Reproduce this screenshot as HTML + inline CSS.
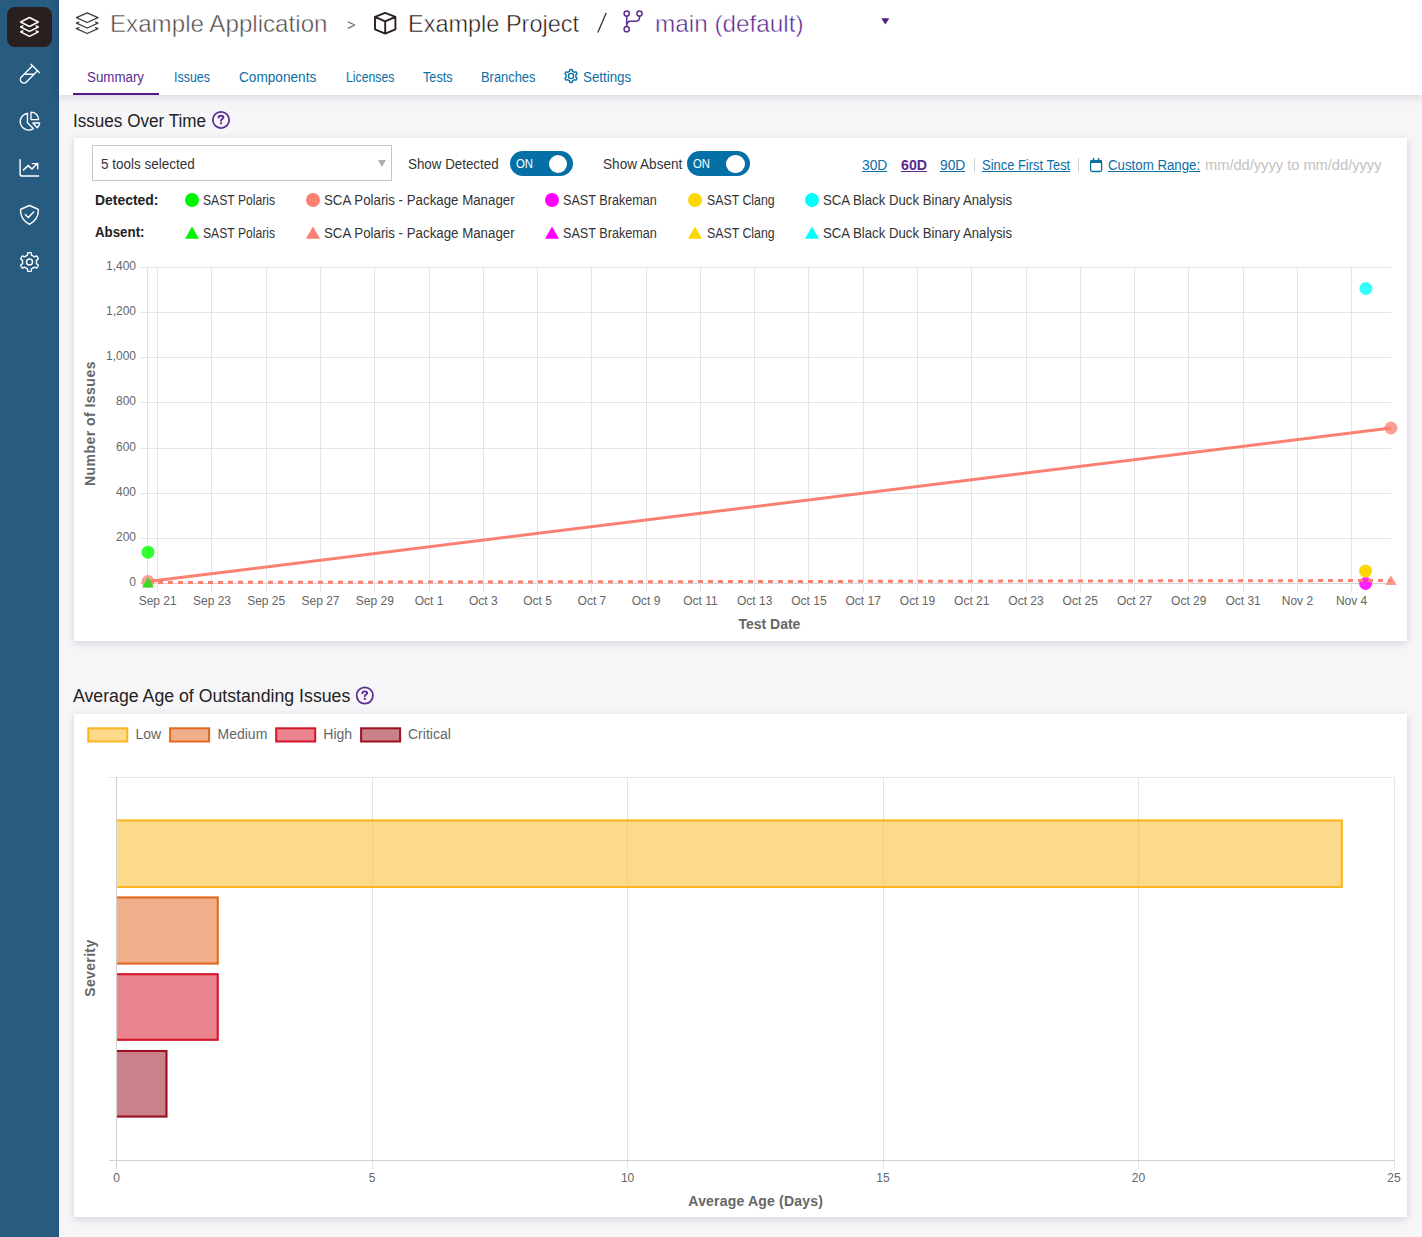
<!DOCTYPE html>
<html><head><meta charset="utf-8"><title>Summary</title>
<style>
html,body{margin:0;padding:0;}
body{width:1422px;height:1237px;position:relative;overflow:hidden;background:#f6f6f9;font-family:"Liberation Sans", sans-serif;}
.abs{position:absolute;}
.ic{position:absolute;overflow:visible;}
.t{position:absolute;white-space:pre;line-height:1;transform-origin:0 0;}
.ct{font-family:"Liberation Sans", sans-serif;font-size:12px;fill:#666;}
.cl{font-family:"Liberation Sans", sans-serif;font-size:14px;fill:#666;}
.cb{font-family:"Liberation Sans", sans-serif;font-size:14px;font-weight:bold;fill:#666;}
</style></head><body>
<div class="abs" style="left:0;top:0;width:58px;height:1237px;background:#285b80;border-right:1px solid #215380"></div>
<div class="abs" style="left:7px;top:7px;width:45px;height:40px;border-radius:8px;background:#2a1f1f"></div>
<div class="abs" style="left:59px;top:0;width:1363px;height:95px;background:#fff;box-shadow:0 2px 8px rgba(20,20,50,0.15)"></div>
<div class="abs" style="left:73px;top:93px;width:86px;height:2px;background:#52198a"></div>
<div class="abs" style="left:74px;top:138px;width:1333px;height:503px;background:#fff;box-shadow:0 2px 8px rgba(20,20,40,0.15)"></div>
<div class="abs" style="left:74px;top:714px;width:1333px;height:503px;background:#fff;box-shadow:0 2px 8px rgba(20,20,40,0.15)"></div>
<svg class="abs" style="left:0;top:0" width="1422" height="720"><path d="M29.47 17.54 L38.32 22.009999999999998 L29.47 26.479999999999997 L20.619999999999997 22.009999999999998 Z M22.82 25.85 L20.619999999999997 26.96 L29.47 31.43 L38.32 26.96 L36.12 25.85 M22.82 30.80 L20.619999999999997 31.91 L29.47 36.38 L38.32 31.91 L36.12 30.80 " fill="none" stroke="#fff" stroke-width="1.5" stroke-linejoin="round" stroke-linecap="round"/><path d="M31 64.25 L39.3 72.55 M32.5 65.75 L21.4 76.9 A3.57 3.57 0 0 0 26.45 81.95 L37.5 70.8 M24 74.2 L34.1 74.2" fill="none" stroke="#fff" stroke-width="1.35" stroke-linecap="round"/><path d="M27.45 113.3 L27.45 122.8 L33.3 128.6 A8.4 8.4 0 1 1 27.45 113.3 Z M31 112.1 L31 119.6 L38.6 119.6 A7.6 7.6 0 0 0 31 112.1 Z M32.9 123 L39.7 123 A7.3 7.3 0 0 1 37.3 127.7 Z" fill="none" stroke="#fff" stroke-width="1.35" stroke-linejoin="round"/><path d="M20.1 159.6 L20.1 173.9 Q20.1 176 22.2 176 L38.6 176 M23.5 169.9 L28.2 165.6 L32 169 L37.3 163.6 M32.3 163.6 L37.7 163.6 L37.7 168.7" fill="none" stroke="#fff" stroke-width="1.45" stroke-linecap="round" stroke-linejoin="miter"/><path d="M29.45 205.5 L37.6 209 Q38.4 209.4 38.4 210.3 C38.3 216.5 35.5 221.3 29.45 224.4 C23.4 221.3 20.6 216.5 20.5 210.3 Q20.5 209.4 21.3 209 Z M25.2 214.6 L28.3 217.4 L33.7 212.1" fill="none" stroke="#fff" stroke-width="1.4" stroke-linejoin="round" stroke-linecap="round"/><path d="M36.50 262.00 L36.50 262.18 L36.49 262.37 L36.48 262.55 L36.46 262.73 L36.44 262.91 L36.41 263.10 L36.38 263.28 L36.35 263.46 L36.39 263.66 L36.80 263.96 L37.39 264.34 L37.94 264.74 L38.27 265.11 L38.28 265.37 L38.18 265.60 L38.09 265.82 L37.98 266.05 L37.88 266.27 L37.76 266.49 L37.64 266.70 L37.51 266.91 L37.38 267.12 L37.25 267.32 L37.10 267.53 L36.96 267.72 L36.81 267.92 L36.58 268.04 L36.10 267.94 L35.47 267.66 L34.84 267.34 L34.38 267.14 L34.18 267.20 L34.05 267.32 L33.91 267.44 L33.76 267.55 L33.61 267.66 L33.46 267.77 L33.31 267.87 L33.16 267.97 L33.00 268.06 L32.84 268.15 L32.68 268.24 L32.51 268.32 L32.35 268.39 L32.18 268.47 L32.01 268.54 L31.84 268.60 L31.66 268.66 L31.51 268.80 L31.46 269.30 L31.42 270.00 L31.35 270.68 L31.20 271.15 L30.97 271.28 L30.73 271.32 L30.48 271.35 L30.24 271.37 L29.99 271.39 L29.75 271.40 L29.50 271.40 L29.25 271.40 L29.01 271.39 L28.76 271.37 L28.52 271.35 L28.27 271.32 L28.03 271.28 L27.80 271.15 L27.65 270.68 L27.58 270.00 L27.54 269.30 L27.49 268.80 L27.34 268.66 L27.16 268.60 L26.99 268.54 L26.82 268.47 L26.65 268.39 L26.49 268.32 L26.32 268.24 L26.16 268.15 L26.00 268.06 L25.84 267.97 L25.69 267.87 L25.54 267.77 L25.39 267.66 L25.24 267.55 L25.09 267.44 L24.95 267.32 L24.82 267.20 L24.62 267.14 L24.16 267.34 L23.53 267.66 L22.90 267.94 L22.42 268.04 L22.19 267.92 L22.04 267.72 L21.90 267.53 L21.75 267.32 L21.62 267.12 L21.49 266.91 L21.36 266.70 L21.24 266.49 L21.12 266.27 L21.02 266.05 L20.91 265.82 L20.82 265.60 L20.72 265.37 L20.73 265.11 L21.06 264.74 L21.61 264.34 L22.20 263.96 L22.61 263.66 L22.65 263.46 L22.62 263.28 L22.59 263.10 L22.56 262.91 L22.54 262.73 L22.52 262.55 L22.51 262.37 L22.50 262.18 L22.50 262.00 L22.50 261.82 L22.51 261.63 L22.52 261.45 L22.54 261.27 L22.56 261.09 L22.59 260.90 L22.62 260.72 L22.65 260.54 L22.61 260.34 L22.20 260.04 L21.61 259.66 L21.06 259.26 L20.73 258.89 L20.72 258.63 L20.82 258.40 L20.91 258.18 L21.02 257.95 L21.12 257.73 L21.24 257.51 L21.36 257.30 L21.49 257.09 L21.62 256.88 L21.75 256.68 L21.90 256.47 L22.04 256.28 L22.19 256.08 L22.42 255.96 L22.90 256.06 L23.53 256.34 L24.16 256.66 L24.62 256.86 L24.82 256.80 L24.95 256.68 L25.09 256.56 L25.24 256.45 L25.39 256.34 L25.54 256.23 L25.69 256.13 L25.84 256.03 L26.00 255.94 L26.16 255.85 L26.32 255.76 L26.49 255.68 L26.65 255.61 L26.82 255.53 L26.99 255.46 L27.16 255.40 L27.34 255.34 L27.49 255.20 L27.54 254.70 L27.58 254.00 L27.65 253.32 L27.80 252.85 L28.03 252.72 L28.27 252.68 L28.52 252.65 L28.76 252.63 L29.01 252.61 L29.25 252.60 L29.50 252.60 L29.75 252.60 L29.99 252.61 L30.24 252.63 L30.48 252.65 L30.73 252.68 L30.97 252.72 L31.20 252.85 L31.35 253.32 L31.42 254.00 L31.46 254.70 L31.51 255.20 L31.66 255.34 L31.84 255.40 L32.01 255.46 L32.18 255.53 L32.35 255.61 L32.51 255.68 L32.68 255.76 L32.84 255.85 L33.00 255.94 L33.16 256.03 L33.31 256.13 L33.46 256.23 L33.61 256.34 L33.76 256.45 L33.91 256.56 L34.05 256.68 L34.18 256.80 L34.38 256.86 L34.84 256.66 L35.47 256.34 L36.10 256.06 L36.58 255.96 L36.81 256.08 L36.96 256.28 L37.10 256.47 L37.25 256.68 L37.38 256.88 L37.51 257.09 L37.64 257.30 L37.76 257.51 L37.88 257.73 L37.98 257.95 L38.09 258.18 L38.18 258.40 L38.28 258.63 L38.27 258.89 L37.94 259.26 L37.39 259.66 L36.80 260.04 L36.39 260.34 L36.35 260.54 L36.38 260.72 L36.41 260.90 L36.44 261.09 L36.46 261.27 L36.48 261.45 L36.49 261.63 L36.50 261.82 Z" fill="none" stroke="#fff" stroke-width="1.4" stroke-linejoin="round"/><circle cx="29.5" cy="262" r="3.0" fill="none" stroke="#fff" stroke-width="1.4"/><path d="M87.2 12.9 L98.0 17.7 L87.2 22.5 L76.4 17.7 Z M78.80 22.13 L76.4 23.20 L87.2 28.00 L98.0 23.20 L95.60 22.13 M78.80 27.63 L76.4 28.70 L87.2 33.50 L98.0 28.70 L95.60 27.63 " fill="none" stroke="#433b3b" stroke-width="1.3" stroke-linejoin="round" stroke-linecap="round"/><path d="M385.2 12.9 L395.4 16.9 L395.4 29.3 L385.2 33.6 L375 29.3 L375 16.9 Z M375 16.9 L385.2 21.3 L395.4 16.9 M385.2 21.3 L385.2 33.6" fill="none" stroke="#2a2020" stroke-width="1.9" stroke-linejoin="round"/><circle cx="626.7" cy="13.5" r="2.6" fill="none" stroke="#5b2d8f" stroke-width="1.5"/><circle cx="639.5" cy="13.5" r="2.6" fill="none" stroke="#5b2d8f" stroke-width="1.5"/><circle cx="626.7" cy="29.2" r="2.6" fill="none" stroke="#5b2d8f" stroke-width="1.5"/><path d="M626.7 16.1 L626.7 26.6 M639.5 16.1 L639.5 17.6 C639.5 20 637.8 21.3 635.6 21.3 L630.6 21.3 C628.2 21.3 626.8 23 626.8 25.6" fill="none" stroke="#5b2d8f" stroke-width="1.5"/><path d="M606.2 13 L597.8 32.4" stroke="#333" stroke-width="1.3"/><path d="M881.3 18.2 L889.3 18.2 L885.3 24.4 Z" fill="#4b2080"/><path d="M575.90 76.00 L575.90 76.13 L575.89 76.26 L575.88 76.38 L575.87 76.51 L575.86 76.64 L575.84 76.77 L575.82 76.89 L575.79 77.02 L575.82 77.16 L576.09 77.36 L576.48 77.62 L576.85 77.90 L577.07 78.15 L577.07 78.33 L577.01 78.49 L576.94 78.64 L576.87 78.80 L576.79 78.95 L576.71 79.10 L576.63 79.25 L576.54 79.40 L576.45 79.54 L576.36 79.68 L576.26 79.82 L576.16 79.96 L576.05 80.09 L575.89 80.18 L575.57 80.12 L575.15 79.94 L574.73 79.73 L574.41 79.60 L574.28 79.64 L574.18 79.73 L574.08 79.81 L573.98 79.89 L573.88 79.96 L573.78 80.04 L573.67 80.11 L573.56 80.18 L573.45 80.24 L573.34 80.31 L573.22 80.37 L573.11 80.42 L572.99 80.48 L572.88 80.53 L572.76 80.57 L572.64 80.62 L572.51 80.66 L572.41 80.76 L572.36 81.09 L572.34 81.56 L572.28 82.02 L572.17 82.33 L572.02 82.42 L571.85 82.44 L571.68 82.46 L571.51 82.48 L571.34 82.49 L571.17 82.50 L571.00 82.50 L570.83 82.50 L570.66 82.49 L570.49 82.48 L570.32 82.46 L570.15 82.44 L569.98 82.42 L569.83 82.33 L569.72 82.02 L569.66 81.56 L569.64 81.09 L569.59 80.76 L569.49 80.66 L569.36 80.62 L569.24 80.57 L569.12 80.53 L569.01 80.48 L568.89 80.42 L568.78 80.37 L568.66 80.31 L568.55 80.24 L568.44 80.18 L568.33 80.11 L568.22 80.04 L568.12 79.96 L568.02 79.89 L567.92 79.81 L567.82 79.73 L567.72 79.64 L567.59 79.60 L567.27 79.73 L566.85 79.94 L566.43 80.12 L566.11 80.18 L565.95 80.09 L565.84 79.96 L565.74 79.82 L565.64 79.68 L565.55 79.54 L565.46 79.40 L565.37 79.25 L565.29 79.10 L565.21 78.95 L565.13 78.80 L565.06 78.64 L564.99 78.49 L564.93 78.33 L564.93 78.15 L565.15 77.90 L565.52 77.62 L565.91 77.36 L566.18 77.16 L566.21 77.02 L566.18 76.89 L566.16 76.77 L566.14 76.64 L566.13 76.51 L566.12 76.38 L566.11 76.26 L566.10 76.13 L566.10 76.00 L566.10 75.87 L566.11 75.74 L566.12 75.62 L566.13 75.49 L566.14 75.36 L566.16 75.23 L566.18 75.11 L566.21 74.98 L566.18 74.84 L565.91 74.64 L565.52 74.38 L565.15 74.10 L564.93 73.85 L564.93 73.67 L564.99 73.51 L565.06 73.36 L565.13 73.20 L565.21 73.05 L565.29 72.90 L565.37 72.75 L565.46 72.60 L565.55 72.46 L565.64 72.32 L565.74 72.18 L565.84 72.04 L565.95 71.91 L566.11 71.82 L566.43 71.88 L566.85 72.06 L567.27 72.27 L567.59 72.40 L567.72 72.36 L567.82 72.27 L567.92 72.19 L568.02 72.11 L568.12 72.04 L568.22 71.96 L568.33 71.89 L568.44 71.82 L568.55 71.76 L568.66 71.69 L568.78 71.63 L568.89 71.58 L569.01 71.52 L569.12 71.47 L569.24 71.43 L569.36 71.38 L569.49 71.34 L569.59 71.24 L569.64 70.91 L569.66 70.44 L569.72 69.98 L569.83 69.67 L569.98 69.58 L570.15 69.56 L570.32 69.54 L570.49 69.52 L570.66 69.51 L570.83 69.50 L571.00 69.50 L571.17 69.50 L571.34 69.51 L571.51 69.52 L571.68 69.54 L571.85 69.56 L572.02 69.58 L572.17 69.67 L572.28 69.98 L572.34 70.44 L572.36 70.91 L572.41 71.24 L572.51 71.34 L572.64 71.38 L572.76 71.43 L572.88 71.47 L572.99 71.52 L573.11 71.58 L573.22 71.63 L573.34 71.69 L573.45 71.76 L573.56 71.82 L573.67 71.89 L573.78 71.96 L573.88 72.04 L573.98 72.11 L574.08 72.19 L574.18 72.27 L574.28 72.36 L574.41 72.40 L574.73 72.27 L575.15 72.06 L575.57 71.88 L575.89 71.82 L576.05 71.91 L576.16 72.04 L576.26 72.18 L576.36 72.32 L576.45 72.46 L576.54 72.60 L576.63 72.75 L576.71 72.90 L576.79 73.05 L576.87 73.20 L576.94 73.36 L577.01 73.51 L577.07 73.67 L577.07 73.85 L576.85 74.10 L576.48 74.38 L576.09 74.64 L575.82 74.84 L575.79 74.98 L575.82 75.11 L575.84 75.23 L575.86 75.36 L575.87 75.49 L575.88 75.62 L575.89 75.74 L575.90 75.87 Z" fill="none" stroke="#0b6ea6" stroke-width="1.35" stroke-linejoin="round"/><circle cx="571" cy="76" r="2.6" fill="none" stroke="#0b6ea6" stroke-width="1.35"/><circle cx="221" cy="119.9" r="8.15" fill="none" stroke="#5b2d8f" stroke-width="1.75"/><path d="M218.60 117.60 C218.60 116.10 219.70 115.80 221.00 115.80 C222.50 115.80 223.40 116.60 223.40 117.60 C223.40 118.90 220.90 119.10 220.90 120.70" fill="none" stroke="#5b2d8f" stroke-width="1.9" stroke-linecap="round" stroke-linejoin="round"/><circle cx="221.00" cy="123.30" r="1.15" fill="#5b2d8f"/><circle cx="364.8" cy="695.5" r="8.15" fill="none" stroke="#5b2d8f" stroke-width="1.75"/><path d="M362.40 693.20 C362.40 691.70 363.50 691.40 364.80 691.40 C366.30 691.40 367.20 692.20 367.20 693.20 C367.20 694.50 364.70 694.70 364.70 696.30" fill="none" stroke="#5b2d8f" stroke-width="1.9" stroke-linecap="round" stroke-linejoin="round"/><circle cx="364.80" cy="698.90" r="1.15" fill="#5b2d8f"/><path d="M1092.1 160.6 L1100.1 160.6 Q1101.6 160.6 1101.6 162.1 L1101.6 170 Q1101.6 171.5 1100.1 171.5 L1092.1 171.5 Q1090.6 171.5 1090.6 170 L1090.6 162.1 Q1090.6 160.6 1092.1 160.6 Z" fill="none" stroke="#0a6fa3" stroke-width="1.3"/><rect x="1090.2" y="160" width="11.8" height="3.1" rx="1.2" fill="#0a6fa3"/><path d="M1093.5 158 L1093.5 160.5 M1098.6 158 L1098.6 160.5" stroke="#0a6fa3" stroke-width="1.5"/></svg>
<div class="abs" style="left:92px;top:145px;width:298px;height:34px;border:1px solid #c6c6c6;background:#fff"></div>
<svg class="ic" style="left:377px;top:159px" width="10" height="9" viewBox="0 0 10 9"><path d="M1 1 L9 1 L5 8 Z" fill="#b0b0b0"/></svg>
<div class="abs" style="left:509.8px;top:151px;width:63px;height:25px;border-radius:13px;background:#0470a5"></div>
<div class="abs" style="left:548.8px;top:154.7px;width:18.5px;height:18.5px;border-radius:50%;background:#fff"></div>
<div class="abs" style="left:687.2px;top:151px;width:63px;height:25px;border-radius:13px;background:#0470a5"></div>
<div class="abs" style="left:726.2px;top:154.7px;width:18.5px;height:18.5px;border-radius:50%;background:#fff"></div>
<div class="abs" style="left:974.1px;top:158px;width:1px;height:14px;background:#d0d0d0"></div>
<div class="abs" style="left:1077.8px;top:158px;width:1px;height:14px;background:#d0d0d0"></div>
<div class="abs" style="left:184.7px;top:193px;width:14px;height:14px;border-radius:50%;background:#00f500"></div>
<svg class="ic" style="left:184.7px;top:226px" width="14" height="13" viewBox="0 0 14 13"><path d="M7 0.6 L14 12.8 L0 12.8 Z" fill="#00f500"/></svg>
<div class="abs" style="left:305.6px;top:193px;width:14px;height:14px;border-radius:50%;background:#fa8072"></div>
<svg class="ic" style="left:305.6px;top:226px" width="14" height="13" viewBox="0 0 14 13"><path d="M7 0.6 L14 12.8 L0 12.8 Z" fill="#fa8072"/></svg>
<div class="abs" style="left:545px;top:193px;width:14px;height:14px;border-radius:50%;background:#ff00ff"></div>
<svg class="ic" style="left:545px;top:226px" width="14" height="13" viewBox="0 0 14 13"><path d="M7 0.6 L14 12.8 L0 12.8 Z" fill="#ff00ff"/></svg>
<div class="abs" style="left:688px;top:193px;width:14px;height:14px;border-radius:50%;background:#ffd700"></div>
<svg class="ic" style="left:688px;top:226px" width="14" height="13" viewBox="0 0 14 13"><path d="M7 0.6 L14 12.8 L0 12.8 Z" fill="#ffd700"/></svg>
<div class="abs" style="left:805.2px;top:193px;width:14px;height:14px;border-radius:50%;background:#00ffff"></div>
<svg class="ic" style="left:805.2px;top:226px" width="14" height="13" viewBox="0 0 14 13"><path d="M7 0.6 L14 12.8 L0 12.8 Z" fill="#00ffff"/></svg>
<svg class="abs" style="left:0;top:0" width="1422" height="660"><line x1="140" y1="583.5" x2="1391" y2="583.5" stroke="#d4d4d4" stroke-width="1"/><line x1="140" y1="538.5" x2="1391" y2="538.5" stroke="#e5e5e5" stroke-width="1"/><line x1="140" y1="493.5" x2="1391" y2="493.5" stroke="#e5e5e5" stroke-width="1"/><line x1="140" y1="448.5" x2="1391" y2="448.5" stroke="#e5e5e5" stroke-width="1"/><line x1="140" y1="402.5" x2="1391" y2="402.5" stroke="#e5e5e5" stroke-width="1"/><line x1="140" y1="357.5" x2="1391" y2="357.5" stroke="#e5e5e5" stroke-width="1"/><line x1="140" y1="312.5" x2="1391" y2="312.5" stroke="#e5e5e5" stroke-width="1"/><line x1="140" y1="267.5" x2="1391" y2="267.5" stroke="#e5e5e5" stroke-width="1"/><text x="136" y="586.2" text-anchor="end" class="ct">0</text><text x="136" y="541.2" text-anchor="end" class="ct">200</text><text x="136" y="496.2" text-anchor="end" class="ct">400</text><text x="136" y="451.2" text-anchor="end" class="ct">600</text><text x="136" y="405.2" text-anchor="end" class="ct">800</text><text x="136" y="360.2" text-anchor="end" class="ct">1,000</text><text x="136" y="315.2" text-anchor="end" class="ct">1,200</text><text x="136" y="270.2" text-anchor="end" class="ct">1,400</text><line x1="147.5" y1="267" x2="147.5" y2="583" stroke="#e0e0e0" stroke-width="1"/><line x1="157.5" y1="267" x2="157.5" y2="592" stroke="#e5e5e5" stroke-width="1"/><text x="157.7" y="604.8" text-anchor="middle" class="ct">Sep 21</text><line x1="211.5" y1="267" x2="211.5" y2="592" stroke="#e5e5e5" stroke-width="1"/><text x="212.0" y="604.8" text-anchor="middle" class="ct">Sep 23</text><line x1="266.5" y1="267" x2="266.5" y2="592" stroke="#e5e5e5" stroke-width="1"/><text x="266.2" y="604.8" text-anchor="middle" class="ct">Sep 25</text><line x1="320.5" y1="267" x2="320.5" y2="592" stroke="#e5e5e5" stroke-width="1"/><text x="320.5" y="604.8" text-anchor="middle" class="ct">Sep 27</text><line x1="374.5" y1="267" x2="374.5" y2="592" stroke="#e5e5e5" stroke-width="1"/><text x="374.8" y="604.8" text-anchor="middle" class="ct">Sep 29</text><line x1="429.5" y1="267" x2="429.5" y2="592" stroke="#e5e5e5" stroke-width="1"/><text x="429.1" y="604.8" text-anchor="middle" class="ct">Oct 1</text><line x1="483.5" y1="267" x2="483.5" y2="592" stroke="#e5e5e5" stroke-width="1"/><text x="483.3" y="604.8" text-anchor="middle" class="ct">Oct 3</text><line x1="537.5" y1="267" x2="537.5" y2="592" stroke="#e5e5e5" stroke-width="1"/><text x="537.6" y="604.8" text-anchor="middle" class="ct">Oct 5</text><line x1="591.5" y1="267" x2="591.5" y2="592" stroke="#e5e5e5" stroke-width="1"/><text x="591.9" y="604.8" text-anchor="middle" class="ct">Oct 7</text><line x1="646.5" y1="267" x2="646.5" y2="592" stroke="#e5e5e5" stroke-width="1"/><text x="646.1" y="604.8" text-anchor="middle" class="ct">Oct 9</text><line x1="700.5" y1="267" x2="700.5" y2="592" stroke="#e5e5e5" stroke-width="1"/><text x="700.4" y="604.8" text-anchor="middle" class="ct">Oct 11</text><line x1="754.5" y1="267" x2="754.5" y2="592" stroke="#e5e5e5" stroke-width="1"/><text x="754.7" y="604.8" text-anchor="middle" class="ct">Oct 13</text><line x1="808.5" y1="267" x2="808.5" y2="592" stroke="#e5e5e5" stroke-width="1"/><text x="808.9" y="604.8" text-anchor="middle" class="ct">Oct 15</text><line x1="863.5" y1="267" x2="863.5" y2="592" stroke="#e5e5e5" stroke-width="1"/><text x="863.2" y="604.8" text-anchor="middle" class="ct">Oct 17</text><line x1="917.5" y1="267" x2="917.5" y2="592" stroke="#e5e5e5" stroke-width="1"/><text x="917.5" y="604.8" text-anchor="middle" class="ct">Oct 19</text><line x1="971.5" y1="267" x2="971.5" y2="592" stroke="#e5e5e5" stroke-width="1"/><text x="971.8" y="604.8" text-anchor="middle" class="ct">Oct 21</text><line x1="1026.5" y1="267" x2="1026.5" y2="592" stroke="#e5e5e5" stroke-width="1"/><text x="1026.0" y="604.8" text-anchor="middle" class="ct">Oct 23</text><line x1="1080.5" y1="267" x2="1080.5" y2="592" stroke="#e5e5e5" stroke-width="1"/><text x="1080.3" y="604.8" text-anchor="middle" class="ct">Oct 25</text><line x1="1134.5" y1="267" x2="1134.5" y2="592" stroke="#e5e5e5" stroke-width="1"/><text x="1134.6" y="604.8" text-anchor="middle" class="ct">Oct 27</text><line x1="1188.5" y1="267" x2="1188.5" y2="592" stroke="#e5e5e5" stroke-width="1"/><text x="1188.8" y="604.8" text-anchor="middle" class="ct">Oct 29</text><line x1="1243.5" y1="267" x2="1243.5" y2="592" stroke="#e5e5e5" stroke-width="1"/><text x="1243.1" y="604.8" text-anchor="middle" class="ct">Oct 31</text><line x1="1297.5" y1="267" x2="1297.5" y2="592" stroke="#e5e5e5" stroke-width="1"/><text x="1297.4" y="604.8" text-anchor="middle" class="ct">Nov 2</text><line x1="1351.5" y1="267" x2="1351.5" y2="592" stroke="#e5e5e5" stroke-width="1"/><text x="1351.6" y="604.8" text-anchor="middle" class="ct">Nov 4</text><text x="769.4" y="629" text-anchor="middle" class="cb">Test Date</text><text transform="translate(95.2 423.8) rotate(-90)" x="0" y="0" text-anchor="middle" class="cb" textLength="124.5" lengthAdjust="spacing">Number of Issues</text><circle cx="1365.6" cy="583.5" r="6.5" fill="#ff22ff"/><line x1="148" y1="582.5" x2="1391" y2="580.5" stroke="#fa8072" stroke-width="3" stroke-dasharray="5 5"/><line x1="148" y1="581.5" x2="1391" y2="428" stroke="#fa8072" stroke-width="3"/><circle cx="148" cy="552.2" r="6.5" fill="#33ff33"/><circle cx="148" cy="581.5" r="6.5" fill="#fa8072" fill-opacity="0.75"/><path d="M148 577 L153.8 587.4 L142.2 587.4 Z" fill="#33dd22"/><circle cx="1391" cy="428" r="6.5" fill="#fa8072" fill-opacity="0.75"/><circle cx="1365.9" cy="288.5" r="6.5" fill="#33ffff"/><circle cx="1365.6" cy="571.1" r="6.5" fill="#ffd700"/><path d="M1391 575.5 L1396.8 585 L1385.2 585 Z" fill="#fa8072" fill-opacity="0.8"/></svg>
<svg class="abs" style="left:0;top:0" width="1422" height="1237"><line x1="116.5" y1="777" x2="116.5" y2="1169" stroke="#e5e5e5" stroke-width="1"/><text x="116.6" y="1182" text-anchor="middle" class="ct">0</text><line x1="372.5" y1="777" x2="372.5" y2="1169" stroke="#e5e5e5" stroke-width="1"/><text x="372.1" y="1182" text-anchor="middle" class="ct">5</text><line x1="627.5" y1="777" x2="627.5" y2="1169" stroke="#e5e5e5" stroke-width="1"/><text x="627.6" y="1182" text-anchor="middle" class="ct">10</text><line x1="883.5" y1="777" x2="883.5" y2="1169" stroke="#e5e5e5" stroke-width="1"/><text x="883.0" y="1182" text-anchor="middle" class="ct">15</text><line x1="1138.5" y1="777" x2="1138.5" y2="1169" stroke="#e5e5e5" stroke-width="1"/><text x="1138.5" y="1182" text-anchor="middle" class="ct">20</text><line x1="1394.5" y1="777" x2="1394.5" y2="1169" stroke="#e5e5e5" stroke-width="1"/><text x="1394.0" y="1182" text-anchor="middle" class="ct">25</text><line x1="109" y1="777.5" x2="1394.5" y2="777.5" stroke="#e5e5e5" stroke-width="1"/><line x1="109" y1="1160.5" x2="1394.5" y2="1160.5" stroke="#d0d0d0" stroke-width="1"/><line x1="116.5" y1="777" x2="116.5" y2="1169" stroke="#d0d0d0" stroke-width="1"/><rect x="117.1" y="819.4" width="1225.7" height="68.5" fill="rgba(252,188,40,0.55)"/><path d="M117.1 820.4 L1341.8 820.4 L1341.8 886.9 L117.1 886.9" fill="none" stroke="#fbb520" stroke-width="2"/><rect x="117.1" y="896.5" width="101.6" height="68.0" fill="rgba(232,120,60,0.6)"/><path d="M117.1 897.5 L217.7 897.5 L217.7 963.5 L117.1 963.5" fill="none" stroke="#e0691f" stroke-width="2"/><rect x="117.1" y="973.3" width="101.6" height="67.5" fill="rgba(215,30,50,0.55)"/><path d="M117.1 974.3 L217.7 974.3 L217.7 1039.8 L117.1 1039.8" fill="none" stroke="#d4152a" stroke-width="2"/><rect x="117.1" y="1049.9" width="50.30000000000001" height="67.59999999999991" fill="rgba(160,25,40,0.55)"/><path d="M117.1 1050.9 L166.4 1050.9 L166.4 1116.5 L117.1 1116.5" fill="none" stroke="#9c1020" stroke-width="2"/><text x="755.6" y="1205.9" text-anchor="middle" class="cb" textLength="134.5" lengthAdjust="spacing">Average Age (Days)</text><text transform="translate(95.1 968.3) rotate(-90)" x="0" y="0" text-anchor="middle" class="cb" textLength="57" lengthAdjust="spacing">Severity</text><rect x="88.3" y="728.3" width="39" height="13.2" fill="rgba(252,188,40,0.55)" stroke="#fbb520" stroke-width="2"/><text x="135.4" y="739.4" class="cl">Low</text><rect x="170.1" y="728.3" width="39" height="13.2" fill="rgba(232,120,60,0.6)" stroke="#e0691f" stroke-width="2"/><text x="217.5" y="739.4" class="cl">Medium</text><rect x="276.2" y="728.3" width="39" height="13.2" fill="rgba(215,30,50,0.55)" stroke="#d4152a" stroke-width="2"/><text x="323.3" y="739.4" class="cl">High</text><rect x="361.1" y="728.3" width="39" height="13.2" fill="rgba(160,25,40,0.55)" stroke="#9c1020" stroke-width="2"/><text x="408" y="739.4" class="cl">Critical</text></svg>
<div class="t" style="left:110.0px;top:12.4px;font-size:24px;font-weight:400;color:#4d4646;transform:scaleX(1.0063);-webkit-text-stroke:0.5px #fff;">Example Application</div>
<div class="t" style="left:346.5px;top:16.8px;font-size:15px;font-weight:400;color:#666;transform:scaleX(0.9697);">&gt;</div>
<div class="t" style="left:407.5px;top:12.4px;font-size:24px;font-weight:400;color:#1a1212;transform:scaleX(0.9785);-webkit-text-stroke:0.5px #fff;">Example Project</div>
<div class="t" style="left:655.0px;top:12.4px;font-size:24px;font-weight:400;color:#55238d;transform:scaleX(1.0127);-webkit-text-stroke:0.5px #fff;">main (default)</div>
<div class="t" style="left:87.4px;top:70.3px;font-size:14px;font-weight:400;color:#5a2a8e;transform:scaleX(0.9515);">Summary</div>
<div class="t" style="left:174.0px;top:70.3px;font-size:14px;font-weight:400;color:#0b6ea6;transform:scaleX(0.8896);">Issues</div>
<div class="t" style="left:239.0px;top:70.3px;font-size:14px;font-weight:400;color:#0b6ea6;transform:scaleX(0.9737);">Components</div>
<div class="t" style="left:346.0px;top:70.3px;font-size:14px;font-weight:400;color:#0b6ea6;transform:scaleX(0.8758);">Licenses</div>
<div class="t" style="left:423.3px;top:70.3px;font-size:14px;font-weight:400;color:#0b6ea6;transform:scaleX(0.9055);">Tests</div>
<div class="t" style="left:481.3px;top:70.3px;font-size:14px;font-weight:400;color:#0b6ea6;transform:scaleX(0.9213);">Branches</div>
<div class="t" style="left:582.6px;top:70.3px;font-size:14px;font-weight:400;color:#0b6ea6;transform:scaleX(0.9507);">Settings</div>
<div class="t" style="left:73.4px;top:112.2px;font-size:18px;font-weight:400;color:#222;transform:scaleX(0.9497);">Issues Over Time</div>
<div class="t" style="left:73.4px;top:687.2px;font-size:18px;font-weight:400;color:#222;transform:scaleX(0.9838);">Average Age of Outstanding Issues</div>
<div class="t" style="left:101.4px;top:157.4px;font-size:14px;font-weight:400;color:#333;transform:scaleX(0.9641);">5 tools selected</div>
<div class="t" style="left:407.5px;top:157.4px;font-size:14px;font-weight:400;color:#333;transform:scaleX(0.9542);">Show Detected</div>
<div class="t" style="left:603.2px;top:157.4px;font-size:14px;font-weight:400;color:#333;transform:scaleX(0.9714);">Show Absent</div>
<div class="t" style="left:516.0px;top:156.6px;font-size:13px;font-weight:400;color:#fff;transform:scaleX(0.8718);">ON</div>
<div class="t" style="left:693.3px;top:156.6px;font-size:13px;font-weight:400;color:#fff;transform:scaleX(0.8718);">ON</div>
<div class="t" style="left:862.4px;top:158.1px;font-size:14px;font-weight:400;color:#0b6ea6;transform:scaleX(0.9849);text-decoration:underline;">30D</div>
<div class="t" style="left:900.9px;top:158.1px;font-size:14px;font-weight:700;color:#5a2a8e;transform:scaleX(1.0161);text-decoration:underline;">60D</div>
<div class="t" style="left:940.4px;top:158.1px;font-size:14px;font-weight:400;color:#0b6ea6;transform:scaleX(0.9849);text-decoration:underline;">90D</div>
<div class="t" style="left:982.4px;top:158.1px;font-size:14px;font-weight:400;color:#0b6ea6;transform:scaleX(0.9242);text-decoration:underline;">Since First Test</div>
<div class="t" style="left:1107.7px;top:158.1px;font-size:14px;font-weight:400;color:#0b6ea6;transform:scaleX(0.9478);text-decoration:underline;">Custom Range:</div>
<div class="t" style="left:1205.0px;top:158.1px;font-size:14px;font-weight:400;color:#c2c2c2;transform:scaleX(1.0455);">mm/dd/yyyy to mm/dd/yyyy</div>
<div class="t" style="left:95.3px;top:192.7px;font-size:14px;font-weight:700;color:#222;transform:scaleX(0.9953);">Detected:</div>
<div class="t" style="left:95.3px;top:225.3px;font-size:14px;font-weight:700;color:#222;transform:scaleX(0.9496);">Absent:</div>
<div class="t" style="left:203.3px;top:192.7px;font-size:14px;font-weight:400;color:#333;transform:scaleX(0.8675);">SAST Polaris</div>
<div class="t" style="left:203.3px;top:225.5px;font-size:14px;font-weight:400;color:#333;transform:scaleX(0.8675);">SAST Polaris</div>
<div class="t" style="left:324.0px;top:192.7px;font-size:14px;font-weight:400;color:#333;transform:scaleX(0.9494);">SCA Polaris - Package Manager</div>
<div class="t" style="left:324.0px;top:225.5px;font-size:14px;font-weight:400;color:#333;transform:scaleX(0.9494);">SCA Polaris - Package Manager</div>
<div class="t" style="left:563.4px;top:192.7px;font-size:14px;font-weight:400;color:#333;transform:scaleX(0.9018);">SAST Brakeman</div>
<div class="t" style="left:563.4px;top:225.5px;font-size:14px;font-weight:400;color:#333;transform:scaleX(0.9018);">SAST Brakeman</div>
<div class="t" style="left:706.7px;top:192.7px;font-size:14px;font-weight:400;color:#333;transform:scaleX(0.8804);">SAST Clang</div>
<div class="t" style="left:706.7px;top:225.5px;font-size:14px;font-weight:400;color:#333;transform:scaleX(0.8804);">SAST Clang</div>
<div class="t" style="left:823.2px;top:192.7px;font-size:14px;font-weight:400;color:#333;transform:scaleX(0.9420);">SCA Black Duck Binary Analysis</div>
<div class="t" style="left:823.2px;top:225.5px;font-size:14px;font-weight:400;color:#333;transform:scaleX(0.9420);">SCA Black Duck Binary Analysis</div>
</body></html>
